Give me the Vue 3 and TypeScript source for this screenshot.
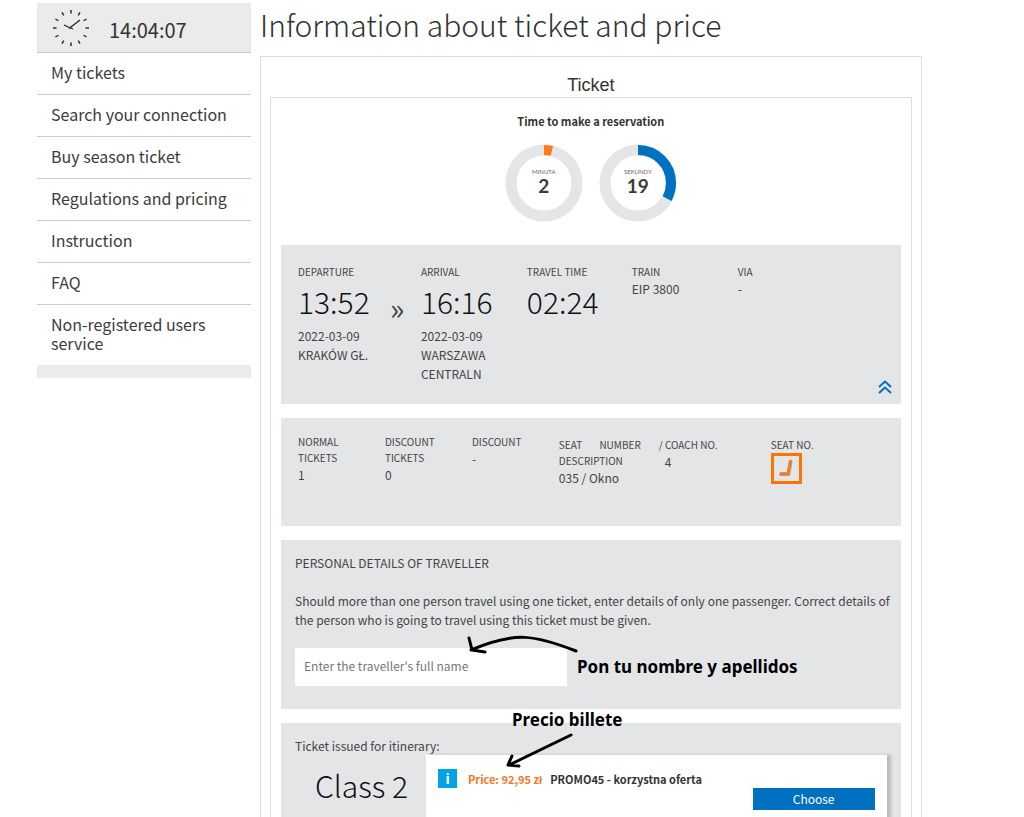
<script setup lang="ts">
import { ref } from 'vue'

interface Ring {
  label: string
  value: number
  max: number
  color: string
}

const menu: string[] = [
  'My tickets',
  'Search your connection',
  'Buy season ticket',
  'Regulations and pricing',
  'Instruction',
  'FAQ',
  'Non-registered users service',
]

const rings: Ring[] = [
  { label: 'MINUTA', value: 2, max: 52, color: '#ff7a1a' },
  { label: 'SEKUNDY', value: 19, max: 58, color: '#0071c1' },
]

const radius = 33
const circumference = 2 * Math.PI * radius
const dash = (r: Ring): string =>
  `${(r.value / r.max) * circumference} ${circumference}`

const ticks: number[] = Array.from({ length: 12 }, (_, i) => i * 30)
const traveller = ref('')
</script>

<template>
  <div class="page">
    <aside class="sidebar">
      <div class="clock">
        <svg width="38" height="38" viewBox="-19 -19 38 38" aria-hidden="true">
          <line v-for="a in ticks" :key="a" y1="-18" y2="-14.5" :transform="`rotate(${a})`" stroke="#222" stroke-width="1.4" />
          <path d="M-7 -3 L2 1 M-2 0.500 L9 -8" fill="none" stroke="#222" stroke-width="1.3" />
        </svg>
        <time>14:04:07</time>
      </div>
      <nav>
        <a v-for="item in menu" :key="item" href="#">{{ item }}</a>
      </nav>
      <div class="sidebar-end"></div>
    </aside>

    <main>
      <h1>Information about ticket and price</h1>
      <div class="frame">
        <h2>Ticket</h2>
        <div class="ticket">
          <section class="timer">
            <h3>Time to make a reservation</h3>
            <div class="rings">
              <div v-for="r in rings" :key="r.label" class="ring">
                <svg viewBox="0 0 78 78" aria-hidden="true">
                  <circle cx="39" cy="39" :r="radius" fill="none" stroke="#e4e5e7" stroke-width="11" />
                  <circle cx="39" cy="39" :r="radius" fill="none" :stroke="r.color" stroke-width="10" :stroke-dasharray="dash(r)" transform="rotate(-90 39 39)" />
                </svg>
                <div class="ring-text">
                  <small>{{ r.label }}</small>
                  <b>{{ r.value }}</b>
                </div>
              </div>
            </div>
          </section>

          <section class="card journey">
            <div>
              <div class="label">DEPARTURE</div>
              <div class="big">13:52</div>
              <div class="place">2022-03-09<br />KRAKÓW GŁ.</div>
            </div>
            <div class="arrow">»</div>
            <div>
              <div class="label">ARRIVAL</div>
              <div class="big">16:16</div>
              <div class="place">2022-03-09<br />WARSZAWA<br />CENTRALN</div>
            </div>
            <div>
              <div class="label">TRAVEL TIME</div>
              <div class="big">02:24</div>
            </div>
            <div>
              <div class="label">TRAIN</div>
              <div class="value">EIP 3800</div>
            </div>
            <div>
              <div class="label">VIA</div>
              <div class="value">-</div>
            </div>
            <button class="collapse" type="button" aria-label="Collapse">
              <svg width="14" height="14" viewBox="0 0 14 14" aria-hidden="true">
                <path d="M1 7 L7 1.500 L13 7 M1 13 L7 7.500 L13 13" fill="none" stroke="#0071c1" stroke-width="2" />
              </svg>
            </button>
          </section>

          <section class="card seats">
            <div>
              <div class="label">NORMAL<br />TICKETS</div>
              <div class="value">1</div>
            </div>
            <div>
              <div class="label">DISCOUNT<br />TICKETS</div>
              <div class="value">0</div>
            </div>
            <div>
              <div class="label">DISCOUNT</div>
              <div class="value">-</div>
            </div>
            <div class="seat">
              <div class="label justified">SEAT NUMBER DESCRIPTION</div>
              <div class="value">035 / Okno</div>
            </div>
            <div class="seat">
              <div class="label">/ COACH NO.</div>
              <div class="value coach">4</div>
            </div>
            <div class="seat">
              <div class="label">SEAT NO.</div>
              <button class="seat-button" type="button" aria-label="Show seat">
                <svg width="25" height="25" viewBox="0 0 25 25" aria-hidden="true">
                  <path d="M16.500 5.500 L14.500 18 H7" fill="none" stroke="#b5aaa2" stroke-width="4" stroke-linecap="round" stroke-linejoin="round" />
                  <path d="M16.500 5.500 L15.500 11 M15 13 L14 18 H7" fill="none" stroke="#f47c20" stroke-width="2.800" stroke-linecap="round" />
                </svg>
              </button>
            </div>
          </section>

          <section class="card details">
            <label class="details-title" for="traveller">PERSONAL DETAILS OF TRAVELLER</label>
            <p>
              Should more than one person travel using one ticket, enter details of only one
              passenger. Correct details of the person who is going to travel using this ticket
              must be given.
            </p>
            <input id="traveller" v-model="traveller" type="text" placeholder="Enter the traveller's full name" />
            <svg class="note-arrow curve" width="112" height="20" viewBox="0 0 112 20" aria-hidden="true">
              <path d="M4 15 C48 -4 68 0 109 16 M2 3 L5 15 L18 17" />
            </svg>
            <span class="note note-name">Pon tu nombre y apellidos</span>
          </section>

          <section class="card offer">
            <span class="note note-price">Precio billete</span>
            <p>Ticket issued for itinerary:</p>
            <div class="offer-row">
              <div class="class-name">Class 2</div>
              <div class="offer-box">
                <div class="offer-line">
                  <span class="info">i</span>
                  <strong class="price">Price: 92,95 zł</strong>
                  <strong>PROMO45 - korzystna oferta</strong>
                </div>
                <button class="choose" type="button">Choose</button>
              </div>
            </div>
            <svg class="note-arrow straight" width="68" height="36" viewBox="0 0 68 36" aria-hidden="true">
              <path d="M65 2 L3 32 M6 23 L2 32 L13 33" />
            </svg>
          </section>
        </div>
      </div>
    </main>
  </div>
</template>

<style>
html,
body {
  margin: 0;
  background: #fff;
}
</style>

<style scoped>
.page {
  box-sizing: border-box;
  display: flex;
  gap: 9px;
  align-items: flex-start;
  height: 100vh;
  overflow: hidden;
  padding: 3px 10% 0 37px;
  color: #444;
  font-family: "Noto Sans CJK SC", "Noto Sans", sans-serif;
  font-size: 12px;
}

.sidebar {
  flex: 0 0 214px;
}

.clock {
  display: flex;
  align-items: center;
  gap: 19px;
  height: 49px;
  padding-left: 15px;
  background: #ebebeb;
  border-bottom: 1px solid #ccc;
  color: #333;
  font-size: 20px;
}

.clock time {
  padding-top: 5px;
  line-height: 24px;
}

nav a {
  display: block;
  padding: 10px 14px 12px;
  border-bottom: 1px solid #ccc;
  color: #3c3c3c;
  font-size: 16px;
  line-height: 19px;
  text-decoration: none;
}

nav a:last-child {
  padding-right: 40px;
  border-bottom: 0;
}

.sidebar-end {
  height: 13px;
  background: #ebebeb;
}

main {
  flex: 1;
  min-width: 0;
}

h1,
h2,
h3,
p {
  margin: 0;
  font-weight: 400;
}

h1 {
  height: 53px;
  color: #333;
  font-size: 30px;
  font-weight: 300;
  line-height: 42px;
  white-space: nowrap;
}

.frame {
  padding: 17px 9px 0;
  border: 1px solid #ddd;
}

h2 {
  padding-bottom: 1px;
  color: #333;
  font-family: "Liberation Sans", Arial, sans-serif;
  font-size: 18px;
  line-height: 22px;
  text-align: center;
}

.ticket {
  display: flex;
  flex-direction: column;
  gap: 14px;
  padding: 14px 10px;
  border: 1px solid #ddd;
}

.timer {
  height: 119px;
  text-align: center;
}

h3 {
  color: #333;
  font-size: 11px;
  font-weight: 600;
  line-height: 18px;
}

.rings {
  display: flex;
  justify-content: center;
  gap: 16px;
  padding-top: 14px;
}

.ring {
  display: grid;
  width: 78px;
  height: 78px;
}

.ring > * {
  grid-area: 1 / 1;
}

.ring-text {
  display: flex;
  flex-direction: column;
  align-items: center;
  justify-content: center;
  padding-bottom: 2px;
  color: #3c3c3c;
}

.ring-text small {
  color: #666;
  font-family: Lato, sans-serif;
  font-size: 6px;
  line-height: 8px;
}

.ring-text b {
  font-family: Lato, sans-serif;
  font-size: 19px;
  line-height: 20px;
}

.card {
  position: relative;
  box-sizing: border-box;
  background: #e4e5e7;
}

.label {
  font-size: 10px;
  line-height: 16px;
}

.value {
  line-height: 18px;
}

.journey {
  display: grid;
  grid-template-columns: 92fr 31fr 106fr 105fr 106fr 163fr;
  min-height: 159px;
  padding: 19px 0 20px 17px;
}

.big {
  margin-bottom: 4px;
  color: #111;
  font-size: 30px;
  font-weight: 300;
  line-height: 42px;
}

.place {
  line-height: 19px;
}

.arrow {
  padding-top: 24px;
  font-size: 30px;
  line-height: 38px;
}

button {
  margin: 0;
  padding: 0;
  border: 0;
  background: none;
  font: inherit;
}

.collapse {
  position: absolute;
  right: 9px;
  bottom: 10px;
  height: 14px;
  line-height: 0;
}

.seats {
  display: grid;
  grid-template-columns: 87fr 87fr 87fr 100fr 112fr 130fr;
  min-height: 108px;
  padding: 16px 0 0 17px;
}

.seat {
  padding-top: 3px;
}

.justified {
  margin-right: 18px;
  text-align: justify;
}

.coach {
  padding-left: 6px;
}

.seat-button {
  display: block;
  border: 3px solid #ff7300;
  line-height: 0;
}

.details {
  min-height: 169px;
  padding: 13px 11px 23px 14px;
}

.details-title {
  display: block;
  line-height: 19px;
}

.details p {
  padding: 19px 0;
  line-height: 19px;
  text-align: justify;
}

.details input {
  display: block;
  box-sizing: border-box;
  width: 272px;
  height: 38px;
  padding: 0 9px 3px;
  border: 0;
  border-radius: 0;
  background: #fff;
  color: #333;
  font: inherit;
}

.details input::placeholder {
  color: #777;
  opacity: 1;
}

.note {
  position: absolute;
  color: #000;
  font-family: "Noto Sans", "Open Sans", sans-serif;
  font-size: 17px;
  font-weight: 700;
  line-height: 22px;
  white-space: nowrap;
}

.note-name {
  top: 116px;
  left: 296px;
}

.note-price {
  top: -14px;
  left: 231px;
}

.note-arrow {
  position: absolute;
  fill: none;
  stroke: #000;
  stroke-width: 3;
  stroke-linecap: round;
  stroke-linejoin: round;
}

.curve {
  top: 95px;
  left: 186px;
}

.straight {
  top: 10px;
  left: 225px;
}

.offer {
  min-height: 150px;
  padding: 13px 14px 20px;
}

.offer p {
  line-height: 19px;
}

.offer-row {
  display: flex;
}

.class-name {
  flex: 0 0 111px;
  padding-left: 20px;
  color: #111;
  font-size: 30px;
  font-weight: 300;
  line-height: 60px;
}

.offer-box {
  display: flex;
  flex: 1;
  flex-direction: column;
  min-height: 96px;
  padding: 14px 12px 0;
  background: #fff;
  box-shadow: 4px 0 3px #bbb;
}

.offer-line {
  display: flex;
  gap: 8px;
  align-items: center;
  height: 19px;
  color: #333;
}

.offer-line strong {
  font-size: 11px;
  font-weight: 600;
}

.info {
  width: 19px;
  margin-right: 3px;
  background: #00a2e8;
  color: #fff;
  font-family: "Noto Sans", sans-serif;
  font-size: 14px;
  font-weight: 700;
  line-height: 19px;
  text-align: center;
}

.offer-line .price {
  color: #ff7324;
}

.choose {
  align-self: flex-end;
  width: 122px;
  height: 22px;
  background: #0071c1;
  color: #fff;
  line-height: 20px;
}
</style>
